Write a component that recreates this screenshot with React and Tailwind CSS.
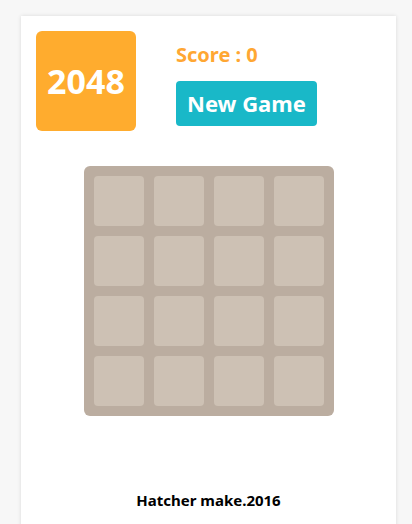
import React from 'react';

const cells = Array.from({ length: 16 });

const App = () => {
  return (
    <div className="min-h-screen bg-[#f7f7f7] pt-4" style={{ fontFamily: '"Noto Sans", "Open Sans", sans-serif' }}>
      <div className="ml-[21px] w-[375px] min-h-[520px] bg-white shadow-[0_0_4px_rgba(0,0,0,0.12)] px-[15px] pt-[15px]">
        <div className="flex gap-10">
          <div className="w-[100px] h-[100px] rounded-md bg-[#ffac2e] flex items-center justify-center text-white font-bold text-[34px]">
            2048
          </div>
          <div className="pt-[10px]">
            <div className="text-[#ffa733] font-bold text-[20px] leading-[28px]">Score : 0</div>
            <button className="mt-[12px] h-[45px] px-[11px] rounded-sm bg-[#19b8c8] text-white font-bold text-[22px]">
              New Game
            </button>
          </div>
        </div>

        <div className="mt-[35px] mx-auto w-[250px] h-[250px] rounded-md bg-[#bbada0] p-[10px] grid grid-cols-4 gap-[10px]">
          {cells.map((_, i) => (
            <div key={i} className="w-[50px] h-[50px] rounded bg-[#cdc1b4]" />
          ))}
        </div>

        <div className="mt-[73px] text-center text-black font-bold text-[15px]">Hatcher make.2016</div>
      </div>
    </div>
  );
};

export default App;
